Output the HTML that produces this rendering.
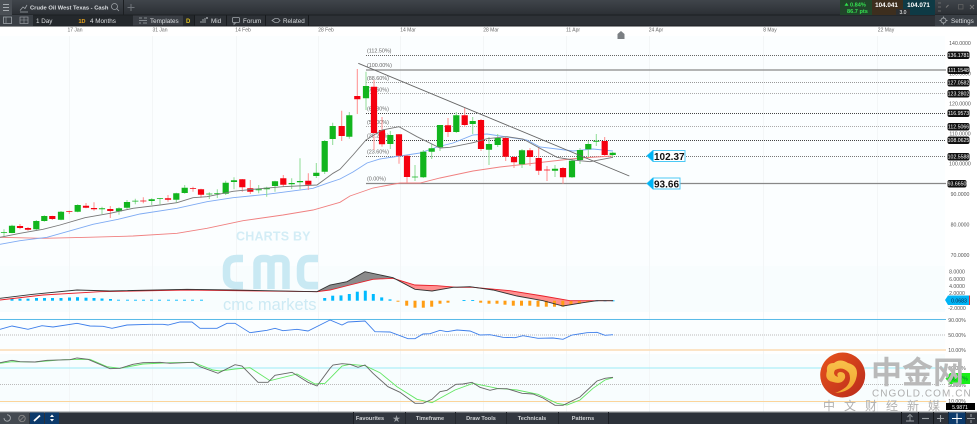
<!DOCTYPE html>
<html><head><meta charset="utf-8"><style>
html,body{margin:0;padding:0;background:#fff}
svg{display:block}
text{font-family:"Liberation Sans","Noto Sans CJK SC",sans-serif}
.t{fill:#dcdfe2;font-size:6.300px}
.d{fill:#666;font-size:5px}
.a{fill:#555;font-size:5.200px;text-anchor:middle}
.p{fill:#fff;font-size:5.200px;text-anchor:middle}
.f{fill:#666;font-size:5.400px}
.b{fill:#d0d3d6;font-size:5.600px;font-weight:bold;text-anchor:middle}
</style></head><body>
<svg width="977" height="424" viewBox="0 0 977 424" xmlns="http://www.w3.org/2000/svg">
<defs><linearGradient id="h" x1="0" y1="0" x2="0" y2="1"><stop offset="0" stop-color="#40454b"/><stop offset="1" stop-color="#2b2f34"/></linearGradient>
<linearGradient id="o" x1="0" y1="0" x2="1" y2="1"><stop offset="0" stop-color="#e8541c"/><stop offset="1" stop-color="#b92a1c"/></linearGradient>
<linearGradient id="y" x1="0" y1="0" x2="0" y2="1"><stop offset="0" stop-color="#f8c14a"/><stop offset="1" stop-color="#f2a530"/></linearGradient></defs>
<rect width="977" height="424" fill="#fff"/>
<rect y="36" width="945" height="230" fill="#fbfeff"/>
<rect y="266" width="945" height="46" fill="#f8fdfe"/>
<rect y="318" width="945" height="33" fill="#fbfeff"/>
<rect y="354" width="945" height="50" fill="#f8fdfe"/>
<g stroke="#f3f6f7" stroke-width="1"><path d="M69.500 36V412M152.500 36V412M236.500 36V412M318.500 36V412M400.500 36V412M483.500 36V412M566.500 36V412M649.500 36V412M763.500 36V412M877.500 36V412"/></g>

<!-- header -->
<rect width="977" height="15" fill="url(#h)"/>
<rect y="15" width="977" height="11" fill="#2d3136"/>
<rect y="14.500" width="977" height="1" fill="#1c1f22"/>
<rect y="25.500" width="977" height="1" fill="#1d2024"/>
<rect width="12" height="15" fill="#4a4f55"/>
<path d="M3 4.500H9M3 7.500H9M3 10.500H9" stroke="#a6abb0" stroke-width="1"/>
<rect x="123" width="1" height="15" fill="#1c1f22"/>
<path d="M20 10.500L23 7L25 8.500L27 5M20 12H28" stroke="#a0a5aa" stroke-width=".8" fill="none"/>
<text x="30" y="9.500" class="t" font-weight="bold" style="font-size:5.800px">Crude Oil West Texas - Cash</text>
<circle cx="114.500" cy="6.500" r="3" fill="none" stroke="#9da2a7" stroke-width=".8"/><path d="M116.500 8.500L119 11" stroke="#9da2a7" stroke-width=".8"/>
<path d="M131 4V11M127.500 7.500H134.500" stroke="#6f747a" stroke-width="1"/>
<rect x="0" y="15" width="33" height="11" fill="#3a3f45"/>
<rect x="3.500" y="17" width="8" height="6.500" fill="none" stroke="#a0a5aa" stroke-width=".8"/><path d="M6 17V23.500" stroke="#a0a5aa" stroke-width=".6"/>
<rect x="20" y="17" width="8" height="6.500" fill="none" stroke="#9a9fa4" stroke-width=".7"/><path d="M24 17V23.500M20 20H28" stroke="#9a9fa4" stroke-width=".6"/>
<rect x="33" y="15.500" width="100" height="10" fill="#24282c"/>
<text x="36" y="22.800" class="t">1 Day</text>
<text x="78.500" y="22.800" font-size="5.500" font-weight="bold" fill="#e8a41c">1D</text>
<text x="90" y="22.800" class="t">4 Months</text>
<rect x="133" y="15.500" width="50" height="10" fill="#3a3e44"/>
<path d="M139 18H142M144 18H147M139 20.500H147M139 23H141M143 23H147" stroke="#9da2a7" stroke-width=".8"/>
<text x="150" y="22.800" class="t">Templates</text>
<rect x="183" y="15.500" width="12" height="10" fill="#24282c"/>
<text x="186" y="23" font-size="6" font-weight="bold" fill="#e0c020">D</text>
<path d="M194.500 15V26M226.500 15V26M265.500 15V26M308.500 15V26" stroke="#181b1e"/>
<path d="M201 23V21M203 23V19M205 23V18" stroke="#9da2a7" stroke-width="1"/><circle cx="207" cy="18" r="1" fill="#9da2a7"/>
<text x="211" y="22.800" class="t">Mid</text>
<rect x="232.500" y="17.500" width="7" height="5" rx="1" fill="none" stroke="#a0a5aa" stroke-width=".8"/><path d="M234 22.500V24.500L236 22.500" stroke="#a0a5aa" stroke-width=".7" fill="none"/>
<text x="243" y="22.800" class="t">Forum</text>
<path d="M272 20.500L275 18.500H278L280 20.500L278 22.500H275Z" fill="none" stroke="#a0a5aa" stroke-width=".8"/>
<text x="283" y="22.800" class="t">Related</text>

<rect x="840" width="32" height="15" fill="#21452a"/>
<path d="M844.500 4.800L846.500 1.800L848.500 4.800Z" fill="#2ee04a" transform="translate(0,1)"/>
<text x="850" y="6.500" font-size="5.600" font-weight="bold" fill="#35e050">0.84%</text>
<text x="847" y="13" font-size="5.600" font-weight="bold" fill="#35e050">86.7 pts</text>
<rect x="872" width="31" height="15" fill="#3d2e1e"/>
<rect x="903" width="32" height="15" fill="#0e3a45"/>
<text x="886.500" y="7" font-size="6.300" font-weight="bold" fill="#fff" text-anchor="middle">104.041</text>
<text x="918.500" y="7" font-size="6.300" font-weight="bold" fill="#fff" text-anchor="middle">104.071</text>
<rect x="896" y="9" width="14" height="6" fill="#2b2e31"/>
<text x="903" y="14" font-size="5" fill="#fff" text-anchor="middle">3.0</text>
<path d="M938 3H941M938 7H941M938 11H941" stroke="#777" stroke-width=".8"/>
<path d="M946 7.500L948.500 5" stroke="#777" stroke-width="1"/><rect x="958.500" y="4.500" width="4.500" height="4.500" fill="none" stroke="#666" stroke-width=".7"/><path d="M970 5L974 9M974 5L970 9" stroke="#777" stroke-width=".9"/>
<rect x="935" y="15" width="42" height="11" fill="#3a3f45"/>
<circle cx="943.500" cy="20.500" r="2.500" fill="none" stroke="#a5a9ad" stroke-width=".9"/><path d="M943.500 16.500V18M943.500 23V24.500M939.500 20.500H941M946 20.500H947.500" stroke="#a5a9ad" stroke-width=".9"/>
<text x="951" y="22.800" class="t">Settings</text>

<!-- date labels -->
<g class="d" text-anchor="middle"><text x="75" y="31.500">17 Jan</text><text x="160" y="31.500">31 Jan</text><text x="243" y="31.500">14 Feb</text><text x="326" y="31.500">28 Feb</text><text x="408" y="31.500">14 Mar</text><text x="491" y="31.500">28 Mar</text><text x="573" y="31.500">11 Apr</text><text x="656" y="31.500">24 Apr</text><text x="770" y="31.500">8 May</text><text x="886" y="31.500">22 May</text></g>
<path d="M617.500 39V34L621 31L624.500 34V39Z" fill="#7b7f83"/>

<!-- watermark -->
<text x="236" y="240.500" font-size="12.500" font-weight="bold" fill="#d3edf6" letter-spacing=".2">CHARTS BY</text>
<g fill="none" stroke="#c9e9f3" stroke-width="7.500">
<path d="M243 258.500H237Q226.500 258.500 226.500 268.500V276Q226.500 285.500 237 285.500H243"/>
<path d="M257 289V264Q257 258.500 263 258.500H265Q271 258.500 271 264V289M271 264Q271 258.500 277 258.500H280Q286 258.500 286 264V289"/>
<path d="M318 258.500H309Q300.500 258.500 300.500 268.500V276Q300.500 285.500 309 285.500H318"/></g>
<text x="223" y="310" font-size="16.500" fill="#cdeaf4">cmc markets</text>

<!-- fib -->
<g fill="none">
<path d="M366 55.500H946" stroke="#666" stroke-dasharray="1 1"/>
<path d="M366 70H946" stroke="#888" stroke-width="1.300"/>
<path d="M366 82.500H946" stroke="#999" stroke-dasharray="1 1"/>
<path d="M366 93.500H946" stroke="#aaa" stroke-dasharray="1 1"/>
<path d="M366 113.500H946" stroke="#444" stroke-dasharray="1 1"/>
<path d="M366 126.500H946" stroke="#aaa" stroke-dasharray="1 1"/>
<path d="M366 140.500H946" stroke="#444" stroke-dasharray="1 1"/>
<path d="M366 156.500H946" stroke="#777" stroke-dasharray="1 1"/>
<path d="M366 183.500H946" stroke="#888" stroke-width="1.300"/>
</g>
<g class="f"><text x="367" y="52.500">(112.50%)</text><text x="367" y="67">(100.00%)</text><text x="367" y="80">(88.60%)</text><text x="367" y="91.500">(78.60%)</text><text x="367" y="110.500">(61.80%)</text><text x="367" y="124">(50.00%)</text><text x="367" y="137.500">(38.20%)</text><text x="367" y="153.500">(23.60%)</text><text x="367" y="180.500">(0.00%)</text></g>

<!-- MAs -->
<g fill="none" stroke-width=".9">
<polyline stroke="#f08080" points="0,237.300 43,238.300 87,237.300 133,236 177,233.300 207,228.300 243,220.700 283,215 313,210 340,202.300 350,196 373,188 400,183 420,183 440,178 473,171 500,167 527,164 553,161 580,158 613,156"/>
<polyline stroke="#7fabf3" points="0,244.300 20,240.700 47,237.300 67,231.700 93,224.300 118,219.300 140,214 177,208.300 207,201.700 233,197.700 267,194.300 313,188.300 327,183.300 340,179 353,172 367,163 380,159 400,156 420,153 437,147 453,143 473,135 487,134 507,137 527,140 540,147 557,149 573,151 593,149 613,151"/>
</g>
<!-- wicks -->
<path fill="none" stroke="#8fdc96" d="M4 229.300V236M12 224.700V233.300M36.300 220V230M44.300 215.300V221.700M61 211V220.300M77.700 204.300V212.300M102 206.700V214M119 207.300V214.700M127 200V209M135.300 198.700V204.300M151.700 198.300V205M160 198V204.300M176.300 192.700V202.700M184.700 185V193.700M209.300 192.300V199M217.300 189.300V198M225.700 180.700V195M234 177.300V189.300M258.700 185V193.300M266.700 186.700V196.700M275 180.700V191.700M291.700 178.300V189M300 158.300V189.300M316.300 163V178M324.700 140V174M332.700 122.700V145M349.300 112V138.700M366 71.700V110M390.300 131V149M415 165V181M423.300 150V178M431.700 144V159M440 125V151M456.300 112V133M472.700 117V134M489 137V165M497.700 134V147M522 149V168M555 165V177M572 159V178M580 148V164M588.300 141V157M596.300 134V146M612.700 152V157"/>
<path fill="none" stroke="#ff8d8d" d="M20 224V229.300M28 227V230.700M52.300 215.700V220M69.300 210.700V214M86 203V208.300M94 202.300V210.700M110.300 206V218M143.300 197.300V203.300M168 195V201.700M193 186.700V191.700M201 188.700V197.700M242.300 179V191.700M250.300 180V194M283.300 175V186.700M308.300 173.300V190M341.700 110.700V141M357.300 69V114M374 80V150M382 117V146.700M399 134V163.700M407 155V183M448 118V137M464.700 108V127M481 119V151M505.700 137V161M514 156V168M530 148V166M538.700 147V175M547 166V181M563 167V183.700M604.700 137V157"/>
<!-- bodies -->
<path fill="none" stroke="#12b51e" stroke-width="6.200" d="M4 232V232.800M12 225.700V233M36.300 221V229.300M44.300 216V221M61 211.700V219.700M77.700 205V211.700M102 208.300V209.300M119 208.300V211.300M127 202V207.700M135.300 200.700V201.500M151.700 199.300V201M160 198.300V199M176.300 193.300V199.700M184.700 187.700V193M209.300 193.600V194.400M217.300 193.300V194.100M225.700 182.700V193.700M234 180.300V182M258.700 189.300V190.300M266.700 187.700V189.300M275 181.300V186M291.700 183V184.300M300 181V182.300M316.300 172.700V176M324.700 141V171.700M332.700 126V139M349.300 115.300V136.700M366 86V98.300M390.300 135V144M415 176.600V177.400M423.300 151.700V177.300M431.700 148.300V151.700M440 125V147.300M456.300 115.300V132M472.700 121V124M489 144V149.700M497.700 138V145M522 150.300V164.300M555 168.700V170.700M572 160.700V177.300M580 150V160M588.300 144V149.300M596.300 140.700V141.700M612.700 152.700V155"/>
<path fill="none" stroke="#f5000f" stroke-width="6.200" d="M20 226V228M28 228V229.700M52.300 216V219M69.300 211.300V212M86 205.700V207.700M94 208V209.300M110.300 209V211M143.300 200.600V201.400M168 198.300V199.700M193 188.300V189M201 189.300V194.700M242.300 179.300V187.300M250.300 188.300V191.700M283.300 178.300V184.700M308.300 180.700V184.700M341.700 126V136M357.300 96V99.300M374 86.700V133M382 130V144.300M399 134.300V155.700M407 155.700V177M448 125.300V132M464.700 115.300V125M481 120V149M505.700 138V156.700M514 157V162.300M530 150.300V157M538.700 158V170.700M547 169.600V170.400M563 168V177.300M604.700 141V155"/>
<polyline fill="none" stroke="#777" stroke-width=".9" points="0,237.300 20,233.300 43,229.300 60,225 85,217.700 110,213.300 133,208.300 160,205 177,202.700 193,197.700 207,196.700 233,191.300 253,189.300 283,186.700 317,185 333,173.300 340,169.300 353,155 366,140 382,130 399,126.700 417,136.700 440,148 450,147.300 473,142.700 487,138.700 507,136.700 523,139 540,148.300 557,157.300 573,160 590,161.700 613,157.300"/>
<path d="M358.300 63.300L629.300 176" stroke="#666" stroke-width=".9" fill="none"/>

<!-- flags -->
<path d="M647 155.800L653 150.500H685V161.500H653Z" fill="#fff" stroke="#4cc9f5" stroke-width="1"/><path d="M647 155.800L653.500 150V161.500Z" fill="#00b4f5"/>
<text x="654" y="160" font-size="10" font-weight="bold" fill="#111">102.37</text>
<path d="M647 183.500L653 178H680V189H653Z" fill="#fff" stroke="#4cc9f5" stroke-width="1"/><path d="M647 183.500L653.500 177.500V189.500Z" fill="#00b4f5"/>
<text x="654" y="187.500" font-size="10" font-weight="bold" fill="#111">93.66</text>

<!-- right axis -->
<g class="a"><text x="960" y="45">140.0000</text><text x="960" y="75.500">130.0000</text><text x="960" y="105.500">120.0000</text><text x="960" y="135.500">110.0000</text><text x="960" y="165.500">100.0000</text><text x="960" y="196">90.0000</text><text x="960" y="226.500">80.0000</text><text x="960" y="257">70.0000</text></g>
<g fill="#111"><rect x="947.500" y="51.500" width="22" height="7.500" rx="2"/><rect x="947.500" y="66.500" width="22" height="7.500" rx="2"/><rect x="947.500" y="79" width="22" height="7.500" rx="2"/><rect x="947.500" y="90" width="22" height="7.500" rx="2"/><rect x="947.500" y="109.500" width="22" height="7.500" rx="2"/><rect x="947.500" y="123" width="22" height="7.500" rx="2"/><rect x="947.500" y="136.500" width="22" height="7.500" rx="2"/><rect x="947.500" y="153" width="22" height="7.500" rx="2"/><rect x="947.500" y="180" width="19" height="7.500" rx="2"/></g>
<g class="p"><text x="958.500" y="57.200">136.1781</text><text x="958.500" y="72.200">111.1548</text><text x="958.500" y="84.700">127.0582</text><text x="958.500" y="95.700">123.2802</text><text x="958.500" y="115.200">116.9573</text><text x="958.500" y="128.700">112.5066</text><text x="958.500" y="142.200">108.0625</text><text x="958.500" y="158.700">102.5588</text><text x="957" y="185.700">93.6650</text></g>

<!-- MACD -->
<polygon fill="#8b8b8b" points="317,291.700 330,285 347,281.700 365,271.700 393,277.700 373,279.300 350,285 330,290"/>
<polygon fill="#ff8f8f" points="393,278 415,285 437,285.700 457,287.300 473,287.300 510,290.700 543,296 570,300.700 597,300.700 583,302.700 563,306 543,300.700 517,296 493,290 470,286.700 453,287.300 432,291 415,289.300"/>
<g fill="#00baff"><rect x="10.500" y="298.700" width="3" height="2"/><rect x="18.500" y="298.700" width="3" height="2"/><rect x="26.500" y="298.700" width="3" height="2"/><rect x="35" y="298" width="3" height="2.700"/><rect x="43" y="298" width="3" height="2.700"/><rect x="51" y="298" width="3" height="2.700"/><rect x="59.500" y="298" width="3" height="2.700"/><rect x="68" y="297.500" width="3" height="3.200"/><rect x="76" y="297.200" width="3" height="3.500"/><rect x="84.500" y="297.700" width="3" height="3"/><rect x="92.500" y="298" width="3" height="2.700"/><rect x="100.500" y="298.500" width="3" height="2.200"/><rect x="109" y="299" width="3" height="1.700"/><path d="M117 300.200H120M126 300.200H129M134 300.200H137M142 300.200H145M150 300.200H153M158 300.200H161M167 300.200H170M175 300.200H178M183 300.200H186M191 300.200H194M200 300.200H203" stroke="#00baff" stroke-width=".9"/><rect x="323.200" y="298" width="3" height="2.700"/><rect x="331.200" y="295.700" width="3" height="5"/><rect x="339.500" y="295.400" width="3" height="5.300"/><rect x="347.800" y="294" width="3" height="6.700"/><rect x="355.800" y="291.700" width="3" height="9"/><rect x="363.800" y="290.700" width="3" height="10"/><rect x="371.800" y="294" width="3" height="6.700"/><rect x="380.200" y="297.400" width="3" height="3.300"/><rect x="388.500" y="299.400" width="3" height="1.300"/><rect x="462.500" y="300" width="3" height=".9"/><rect x="471.200" y="300" width="3" height=".9"/><rect x="595.200" y="300.300" width="3" height="1"/><rect x="603.500" y="300.300" width="3" height="1"/><rect x="611.500" y="300.300" width="3" height="1"/></g>
<g fill="#ff9d14"><rect x="396.500" y="300.700" width="3" height="1"/><rect x="405.200" y="300.700" width="3" height="5"/><rect x="413.500" y="300.700" width="3" height="7"/><rect x="421.800" y="300.700" width="3" height="7"/><rect x="430.200" y="300.700" width="3" height="6"/><rect x="438.500" y="300.700" width="3" height="3"/><rect x="446.500" y="300.700" width="3" height="2"/><rect x="479.200" y="300.700" width="3" height="2"/><rect x="487.500" y="300.700" width="3" height="3"/><rect x="495.500" y="300.700" width="3" height="3"/><rect x="503.500" y="300.700" width="3" height="4"/><rect x="511.800" y="300.700" width="3" height="5"/><rect x="520" y="300.700" width="3" height="5"/><rect x="528.300" y="300.700" width="3" height="5"/><rect x="536.500" y="300.700" width="3" height="6"/><rect x="544.800" y="300.700" width="3" height="6"/><rect x="553" y="300.700" width="3" height="6"/><rect x="561.300" y="300.700" width="3" height="6"/><rect x="569.500" y="300.700" width="3" height="4"/><rect x="577.800" y="300.700" width="3" height="3"/><rect x="586" y="300.700" width="3" height="1"/></g>
<polyline fill="none" stroke="#e8202a" stroke-width=".9" points="0,300 43,295 100,291.700 187,290 317,291.700 330,290 350,285 373,279.300 393,278.300 415,285 437,285.700 457,287.300 473,287.300 510,290.700 543,296 570,300.700 613,300.700"/>
<polyline fill="none" stroke="#333" stroke-width=".9" points="0,298.300 33,294.300 77,290 110,291 187,289.300 233,290 317,291.700 330,285 347,281.700 365,271.700 393,277.700 415,289.300 432,291 453,287.300 470,286.700 493,290 517,296 543,300.700 563,306 583,302.700 597,300.700 613,300.700"/>
<g class="a" text-anchor="middle"><text x="957" y="273.500">8.0000</text><text x="957" y="281">6.0000</text><text x="957" y="288">4.0000</text><text x="957" y="295">2.0000</text><text x="957" y="310">-2.0000</text></g>
<path d="M945 300L948 295.500H969.500V305H948Z" fill="#00b4f5"/><rect x="969" y="295.500" width="1" height="9.500" fill="#e03030"/>
<text x="959" y="302.300" font-size="5.200" fill="#124" text-anchor="middle">0.0683</text>

<!-- RSI -->
<path d="M0 319.500H946" stroke="#5cbbe8" stroke-width="1"/>
<path d="M0 335H946" stroke="#bbb" stroke-dasharray="1 1"/>
<path d="M0 350H946" stroke="#fcdcb4" stroke-width="1.500"/>
<polyline fill="none" stroke="#3d7eea" stroke-width=".9" points="0,329.300 12,326 28,329.300 42,325.700 53,327 77,323.300 90,326 103,326.300 112,328.300 127,325 150,324.300 163,324.300 168,325 180,322 192,322 200,328.300 217,328.300 227,323.300 235,323.300 250,332.700 267,330.300 275,328.300 283,330.700 297,329.300 308,331 328,321 330,320 342,325 348,322 365,321 375,331.700 390,332 408,338.700 415,338.700 423,334 430,333.700 440,330.300 447,331.700 457,330 470,331 480,335 490,334.700 503,337.300 515,337.700 523,335.700 538,338.300 553,338 563,339.300 572,335 587,332.700 597,332.300 605,335.300 613,334.700"/>
<g class="a"><text x="957" y="322">90.00%</text><text x="957" y="337">50.00%</text><text x="957" y="352">10.00%</text></g>

<!-- Stoch -->
<path d="M0 368H946" stroke="#aeeef7" stroke-width="1.300"/>
<path d="M0 384.500H946" stroke="#bbb" stroke-dasharray="1 1"/>
<path d="M0 401.500H946" stroke="#fcd49a" stroke-width="1"/>
<polyline fill="none" stroke="#62e662" stroke-width=".9" points="0,363.300 12,361.700 35,362 63,359.700 90,359.300 107,366.700 120,368.300 143,364 170,362.700 193,362.300 213,370 220,371 235,369 250,367.700 270,380.700 297,374 315,384 325,383.300 330,378.300 342,366 350,364.300 365,365.700 380,372.700 397,386.700 417,399.300 432,402.700 455,390 473,383.300 497,388.300 517,390 538,394.300 557,403.300 567,405 580,400 593,388.300 605,380 613,377.700"/>
<polyline fill="none" stroke="#666" stroke-width=".9" points="0,362.700 12,360.300 20,361.700 35,362 47,360.300 70,359.700 77,358 88,359.300 110,368.700 120,368.300 133,364.300 143,362.700 160,362.300 170,363.300 193,362.300 200,366.700 218,373.300 235,364.700 242,366 258,382.300 268,382.300 275,375.300 292,372.300 308,382.300 317,386 330,368.300 333,365 342,363.700 350,364.300 358,367.300 365,365 373,373.300 388,386.700 400,392.300 415,403.300 423,403.300 432,399.300 440,391.700 447,390.300 456,384.300 463,384 472,382.300 480,387.300 490,390.300 497,388.700 507,388.700 522,393.300 533,394 543,398 555,405.300 563,405.300 580,397 597,381 605,378.300 613,377.300"/>
<g class="a"><text x="957" y="370">90.00%</text><text x="957" y="387">50.00%</text><text x="957" y="403">10.00%</text></g>
<path d="M945.500 378.500L950 373H970V384H950Z" fill="#1aef1a"/>
<text x="959" y="380.500" font-size="5.200" fill="#073" text-anchor="middle">80.77%</text>
<rect x="946" y="403" width="29" height="7" fill="#000"/>
<text x="960" y="409" class="p">5.9871</text>

<!-- cngold watermark -->
<circle cx="842.700" cy="375" r="22.500" fill="url(#o)"/>
<path d="M835 393Q852 392 856 379Q860 366 848 363Q840 358 834 363Q826 363 827 371Q824 380 833 382Q842 385 845 378Q846 372 840 372Q836 373 838 377Q832 375 835 370Q843 366 849 373Q852 381 846 387Q841 391 835 393Z" fill="url(#y)"/>
<text x="871" y="383.500" font-size="31" font-weight="bold" fill="#b9b9b9" style="font-family:'Noto Sans CJK SC',sans-serif">中金网</text>
<text x="872" y="396.500" font-size="10" fill="#aeaeae" letter-spacing="1.050">CNGOLD.COM.CN</text>
<text x="823" y="410" font-size="12" fill="#b0b0b0" letter-spacing="9" style="font-family:'Noto Sans CJK SC',sans-serif">中文财经新媒</text>

<!-- bottom bar -->
<rect y="412" width="977" height="12" fill="#2d323a"/>
<rect y="411.500" width="977" height="1.200" fill="#8a8d90"/>
<rect x="0" y="412.500" width="29" height="12" fill="#444a51"/>
<path d="M4 418A3.200 3.200 0 1 0 7 414.800" fill="none" stroke="#a6abaf" stroke-width=".9"/>
<circle cx="22" cy="418.500" r="3.200" fill="none" stroke="#888" stroke-width=".9"/><path d="M20 420.500L24 416.500" stroke="#888" stroke-width=".8"/>
<rect x="30" y="412.500" width="14" height="12" fill="#0c3a6b"/><rect x="45" y="412.500" width="14" height="12" fill="#0c3a6b"/>
<path d="M34 421L40 415.500" stroke="#fff" stroke-width="1.800"/>
<path d="M50 417L52 414.500L54 417ZM50 419H54L52 421.500Z" fill="#fff"/>
<g stroke="#15181c"><path d="M353.500 412V424M405.500 412V424M455.500 412V424M506.500 412V424M558.500 412V424M608.500 412V424M901.500 412V424M918.500 412V424M933.500 412V424M948.500 412V424M965.500 412V424"/></g>
<rect x="353.500" y="412.500" width="255" height="12" fill="#3a3f46" opacity=".45"/>
<text x="370" y="420" class="b">Favourites</text>
<text x="396.500" y="421.500" font-size="8" fill="#9a9fa4" text-anchor="middle">★</text>
<text x="430" y="420" class="b">Timeframe</text>
<text x="481" y="420" class="b">Draw Tools</text>
<text x="532" y="420" class="b">Technicals</text>
<text x="583" y="420" class="b">Patterns</text>
<path d="M906 421H914M910 421V416M907.500 417L910 414.500L912.500 417" fill="none" stroke="#9a9fa4" stroke-width=".9"/>
<path d="M922 418.500H929" stroke="#9a9fa4" stroke-width="1.100"/>
<path d="M937 418.500H944M940.500 415V422" stroke="#9a9fa4" stroke-width="1.100"/>
<rect x="948.500" y="412.500" width="17" height="12" fill="#0c3a6b"/>
<path d="M952 418.500H962M957 413.500V423.500" stroke="#fff" stroke-width="1"/>
<path d="M967 418.500H975M971 414V417M971 420V423" stroke="#9a9fa4" stroke-width="1"/>
</svg>
</body></html>
